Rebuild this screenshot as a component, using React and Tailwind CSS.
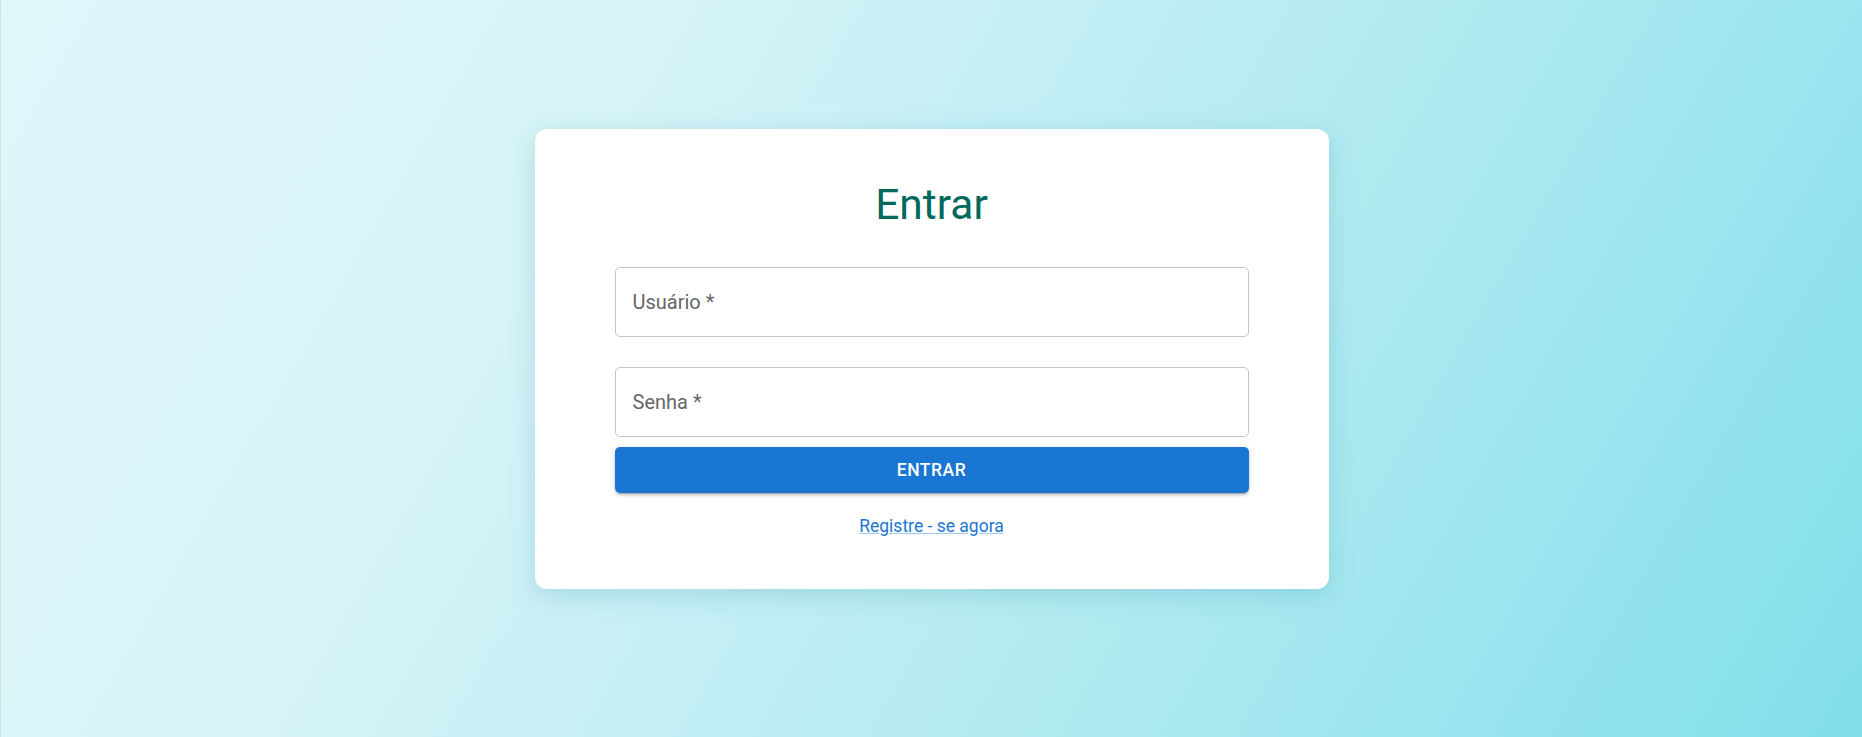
export default function App() {
  return (
    <div
      className="min-h-[737px] w-full flex items-center justify-center border-l border-[#d6dfe0] bg-[linear-gradient(120deg,#e0f7fa_0%,#d6f3f7_30%,#a9e8f0_70%,#80deea_100%)]"
      style={{ fontFamily: 'Roboto, "Liberation Sans", sans-serif' }}
    >
      <div className="w-[794px] bg-white rounded-[12px] shadow-[0_6px_24px_rgba(60,150,170,0.25)] px-[80px] pt-[50px] pb-[48px] -mt-[19px]">
        {/* Title */}
        <h1 className="text-center text-[42.5px] leading-[52.5px] font-normal text-[#00695c]">Entrar</h1>

        <form className="mt-[35.5px] flex flex-col" onSubmit={e => e.preventDefault()}>
          <input
            type="text"
            placeholder="Usuário *"
            className="h-[70px] w-full rounded-[5px] border border-[#c4c4c4] px-[17px] text-[20px] text-[#222] placeholder:text-[#666] outline-none"
          />
          <input
            type="password"
            placeholder="Senha *"
            className="mt-[30px] h-[70px] w-full rounded-[5px] border border-[#c4c4c4] px-[17px] text-[20px] text-[#222] placeholder:text-[#666] outline-none"
          />
          <button
            type="submit"
            className="mt-[10px] h-[46px] w-full rounded-[5px] bg-[#1976d2] text-white text-[17.5px] font-medium tracking-[0.5px] shadow-[0_3px_2px_-2px_rgba(0,0,0,0.2),0_2px_3px_0_rgba(0,0,0,0.14),0_1px_6px_0_rgba(0,0,0,0.12)]"
          >
            ENTRAR
          </button>
        </form>

        <div className="mt-[20px] text-center leading-[26.25px]">
          <a
            href="#"
            className="text-[17.5px] text-[#1976d2] underline decoration-[rgba(25,118,210,0.4)]"
          >
            Registre - se agora
          </a>
        </div>
      </div>
    </div>
  );
}
